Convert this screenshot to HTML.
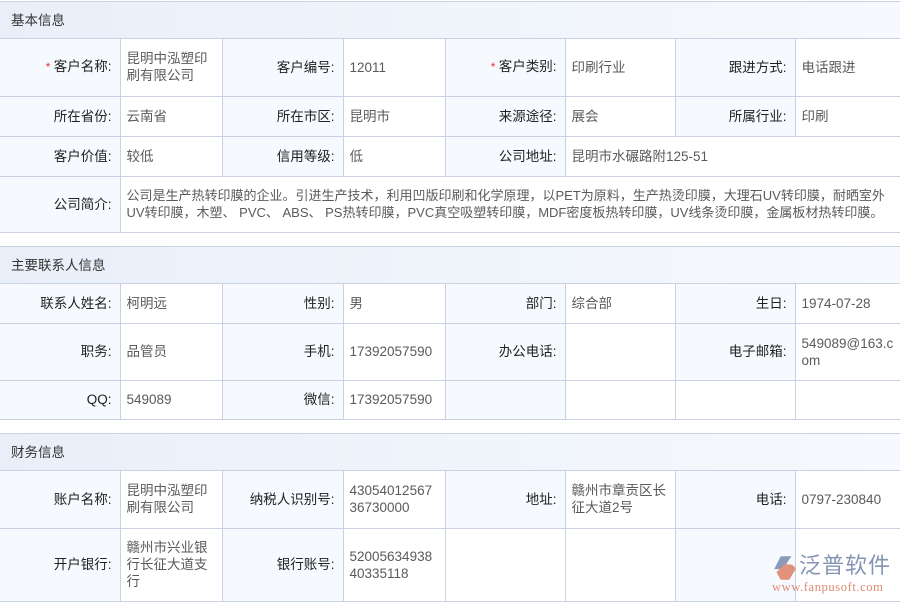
<!DOCTYPE html>
<html><head><meta charset="utf-8"><style>
*{margin:0;padding:0;box-sizing:border-box}
body{width:900px;height:600px;background:#fff;font-family:"Liberation Sans","Noto Sans CJK SC",sans-serif;font-size:13.5px;position:relative;overflow:hidden}
.sec{position:absolute;left:0;width:900px;border-top:1px solid #c9d1e3}
.hd{height:37px;line-height:37px;padding-left:11px;color:#333;background:linear-gradient(90deg,#e9eff9,#f6f9fd);border-bottom:1px solid #c9d1e3}
table{border-collapse:collapse;table-layout:fixed;width:900px}
td{border:1px solid #c9d1e3;border-top:none;vertical-align:middle;line-height:17px}
td.l{background:#f6f9fe;color:#222;text-align:right;padding-right:8px}
td.v{background:#fff;color:#5a5a5a;padding-left:6px;padding-right:12px;word-break:break-all}
td.i{padding-right:2px;word-break:normal;overflow-wrap:anywhere;font-size:13px}
td:first-child{border-left:none}
td:last-child{border-right:none}
.r{color:#e33;font-size:12px}
</style></head><body>
<div class="sec" style="top:1px">
<div class="hd">基本信息</div>
<table>
<colgroup><col style="width:120px"><col style="width:102px"><col style="width:121px"><col style="width:102px"><col style="width:120px"><col style="width:110px"><col style="width:120px"><col style="width:105px"></colgroup>
<tr style="height:57px"><td class="l"><span class="r">* </span>客户名称:</td><td class="v">昆明中泓塑印刷有限公司</td><td class="l">客户编号:</td><td class="v">12011</td><td class="l"><span class="r">* </span>客户类别:</td><td class="v">印刷行业</td><td class="l">跟进方式:</td><td class="v">电话跟进</td></tr>
<tr style="height:40px"><td class="l">所在省份:</td><td class="v">云南省</td><td class="l">所在市区:</td><td class="v">昆明市</td><td class="l">来源途径:</td><td class="v">展会</td><td class="l">所属行业:</td><td class="v">印刷</td></tr>
<tr style="height:40px"><td class="l">客户价值:</td><td class="v">较低</td><td class="l">信用等级:</td><td class="v">低</td><td class="l">公司地址:</td><td class="v" colspan="3">昆明市水碾路附125-51</td></tr>
<tr style="height:56px"><td class="l">公司简介:</td><td class="v i" colspan="7">公司是生产热转印膜的企业。引进生产技术，利用凹版印刷和化学原理，以PET为原料，生产热烫印膜，大理石UV转印膜，耐晒室外 UV转印膜，木塑、 PVC、 ABS、 PS热转印膜，PVC真空吸塑转印膜，MDF密度板热转印膜，UV线条烫印膜，金属板材热转印膜。</td></tr>
</table></div>

<div class="sec" style="top:246px">
<div class="hd">主要联系人信息</div>
<table>
<colgroup><col style="width:120px"><col style="width:102px"><col style="width:121px"><col style="width:102px"><col style="width:120px"><col style="width:110px"><col style="width:120px"><col style="width:105px"></colgroup>
<tr style="height:39px"><td class="l">联系人姓名:</td><td class="v">柯明远</td><td class="l">性别:</td><td class="v">男</td><td class="l">部门:</td><td class="v">综合部</td><td class="l">生日:</td><td class="v">1974-07-28</td></tr>
<tr style="height:57px"><td class="l">职务:</td><td class="v">品管员</td><td class="l">手机:</td><td class="v">17392057590</td><td class="l">办公电话:</td><td class="v"></td><td class="l">电子邮箱:</td><td class="v" style="padding-right:2px">549089@163.com</td></tr>
<tr style="height:39px"><td class="l">QQ:</td><td class="v">549089</td><td class="l">微信:</td><td class="v">17392057590</td><td class="l"></td><td class="v"></td><td class="v"></td><td class="v"></td></tr>
</table></div>

<div class="sec" style="top:433px">
<div class="hd">财务信息</div>
<table>
<colgroup><col style="width:120px"><col style="width:102px"><col style="width:121px"><col style="width:102px"><col style="width:120px"><col style="width:110px"><col style="width:120px"><col style="width:105px"></colgroup>
<tr style="height:57px"><td class="l">账户名称:</td><td class="v">昆明中泓塑印刷有限公司</td><td class="l">纳税人识别号:</td><td class="v">4305401256736730000</td><td class="l">地址:</td><td class="v" style="padding-right:2px">赣州市章贡区长征大道2号</td><td class="l">电话:</td><td class="v">0797-230840</td></tr>
<tr style="height:73px"><td class="l">开户银行:</td><td class="v">赣州市兴业银行长征大道支行</td><td class="l">银行账号:</td><td class="v">5200563493840335118</td><td class="v"></td><td class="v"></td><td class="l"></td><td class="v"></td></tr>
</table></div>

<div style="position:absolute;left:768px;top:553px;width:130px;height:45px">
<svg width="30" height="28" style="position:absolute;left:2px;top:1px" viewBox="0 0 28 26"><path d="M10 2 L20 2 L12 14 L4 14 Z" fill="#8a9ab8"/><path d="M6 17 L13 10 Q22 8 24 14 L18 24 L10 24 Z" fill="#e0937a"/></svg>
<div style="position:absolute;left:31px;top:-1px;font-size:22px;color:#8494b4;letter-spacing:1px;line-height:28px">泛普软件</div>
<div style="position:absolute;left:4px;top:27px;font-family:'Liberation Serif',serif;font-size:12.5px;color:#e08a70;letter-spacing:0.6px">www.fanpusoft.com</div>
</div>
</body></html>
